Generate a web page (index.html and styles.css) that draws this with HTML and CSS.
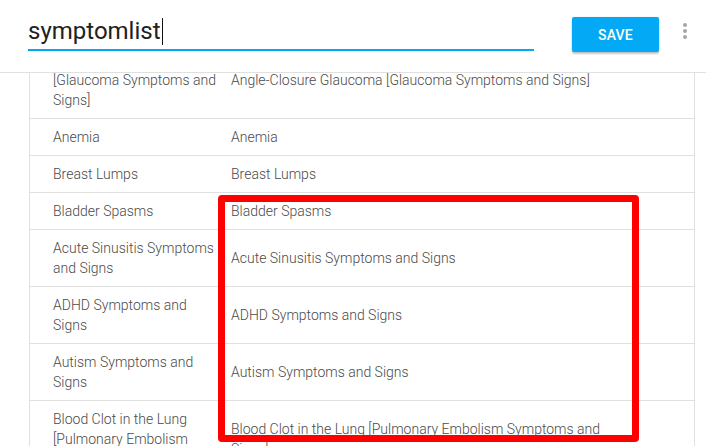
FILE: index.html
```html
<!DOCTYPE html>
<html>
<head>
<meta charset="utf-8">
<link rel="stylesheet" href="styles.css">
</head>
<body>
<header class="topbar">
  <div class="field"><span class="field-text">symptomlist</span><span class="caret"></span></div>
  <button class="save">SAVE</button>
  <div class="kebab"><span></span><span></span><span></span></div>
</header>
<main class="viewport">
  <div class="tablewrap">
    <table class="list">
      <tr><td class="c1">Angle-Closure Glaucoma [Glaucoma Symptoms and Signs]</td><td class="c2">Angle-Closure Glaucoma [Glaucoma Symptoms and Signs]</td><td class="c3"></td></tr>
      <tr><td class="c1">Anemia</td><td class="c2">Anemia</td><td class="c3"></td></tr>
      <tr><td class="c1">Breast Lumps</td><td class="c2">Breast Lumps</td><td class="c3"></td></tr>
      <tr><td class="c1">Bladder Spasms</td><td class="c2">Bladder Spasms</td><td class="c3"></td></tr>
      <tr><td class="c1">Acute Sinusitis Symptoms and Signs</td><td class="c2">Acute Sinusitis Symptoms and Signs</td><td class="c3"></td></tr>
      <tr><td class="c1">ADHD Symptoms and Signs</td><td class="c2">ADHD Symptoms and Signs</td><td class="c3"></td></tr>
      <tr><td class="c1">Autism Symptoms and Signs</td><td class="c2">Autism Symptoms and Signs</td><td class="c3"></td></tr>
      <tr><td class="c1">Blood Clot in the Lung [Pulmonary Embolism Symptoms and Signs]</td><td class="c2">Blood Clot in the Lung [Pulmonary Embolism Symptoms and Signs]</td><td class="c3"></td></tr>
    </table>
  </div>
  <div class="highlight"></div>
</main>
</body>
</html>
```
FILE: styles.css
```css
html, body {
  margin: 0;
  padding: 0;
  background: #fff;
  font-family: Roboto, "Noto Sans", sans-serif;
  overflow: hidden;
}
.topbar {
  display: flex;
  align-items: flex-start;
  height: 72px;
  padding-left: 28px;
  border-bottom: 1px solid #e0e0e0;
  box-sizing: content-box;
}
.field {
  width: 506px;
  margin-top: 17px;
  padding-bottom: 3px;
  border-bottom: 2px solid #03a9f4;
  display: flex;
  align-items: center;
  height: 29px;
  box-sizing: content-box;
}
.field-text {
  font-size: 24px;
  line-height: 29px;
  color: #212121;
}
.caret {
  width: 1px;
  height: 27px;
  background: #111;
  margin-left: 1px;
}
.save {
  margin-left: 38px;
  margin-top: 17px;
  width: 87px;
  height: 35px;
  border: none;
  border-radius: 2px;
  background: #03a9f4;
  color: #fff;
  font-family: Roboto, sans-serif;
  font-weight: 500;
  font-size: 14px;
  letter-spacing: 0.2px;
  box-shadow: 0 2px 2px rgba(0,0,0,0.22), 0 0 2px rgba(0,0,0,0.12);
  padding: 0;
}
.kebab {
  margin-left: 24px;
  margin-top: 23px;
  display: flex;
  flex-direction: column;
  gap: 2px;
}
.kebab span {
  width: 4px;
  height: 4px;
  border-radius: 50%;
  background: #a6a6a6;
}
.viewport {
  position: relative;
  height: 373px;
  overflow: hidden;
}
.tablewrap {
  margin: -31px 11px 0 29px;
  border-left: 1px solid #e0e0e0;
  border-right: 1px solid #e0e0e0;
}
.list {
  width: 100%;
  border-collapse: collapse;
  font-size: 14px;
  line-height: 20px;
  font-weight: 300;
  color: #4a4a4a;
}
.list td {
  padding: 8px 0;
  border-bottom: 1px solid #e0e0e0;
  vertical-align: middle;
}
.list .c1 {
  width: 170px;
  padding-left: 23px;
  padding-right: 8px;
  vertical-align: top;
}
.list .c2 {
  width: 400px;
  padding-right: 8px;
}
.highlight {
  position: absolute;
  left: 218px;
  top: 122px;
  width: 421px;
  height: 247px;
  box-sizing: border-box;
  border: 7px solid #ff0000;
  border-radius: 4px;
}
```
